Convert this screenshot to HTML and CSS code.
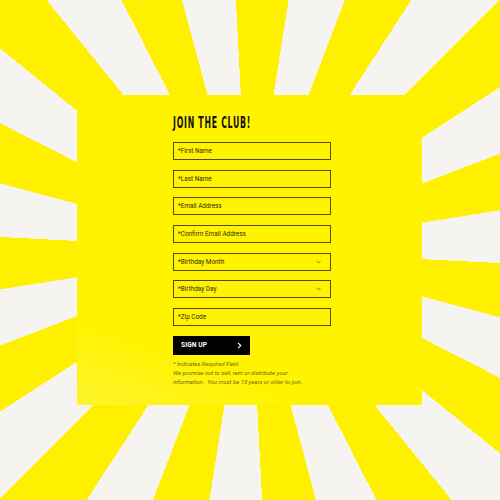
FILE: index.html
```html
<!DOCTYPE html>
<html lang="en">
<head>
<meta charset="utf-8">
<title>Join the Club</title>
<link rel="stylesheet" href="styles.css">
</head>
<body>
<div class="page">
  <div class="card">
    <form class="form">
      <h1 class="title">JOIN THE CLUB!</h1>
      <div class="field"><span class="ph">*First Name</span></div>
      <div class="field"><span class="ph">*Last Name</span></div>
      <div class="field"><span class="ph">*Email Address</span></div>
      <div class="field"><span class="ph">*Confirm Email Address</span></div>
      <div class="field select"><span class="ph">*Birthday Month</span>
        <svg class="chev" width="5" height="4" viewBox="0 0 5 4"><path d="M0.6 1 L2.5 2.9 L4.4 1" fill="none" stroke="#6b6820" stroke-width="0.9"/></svg>
      </div>
      <div class="field select"><span class="ph">*Birthday Day</span>
        <svg class="chev" width="5" height="4" viewBox="0 0 5 4"><path d="M0.6 1 L2.5 2.9 L4.4 1" fill="none" stroke="#6b6820" stroke-width="0.9"/></svg>
      </div>
      <div class="field"><span class="ph">*Zip Code</span></div>
      <button type="button" class="btn"><span>SIGN UP</span>
        <svg width="5" height="7" viewBox="0 0 5 7"><path d="M1 0.8 L3.8 3.5 L1 6.2" fill="none" stroke="#fff" stroke-width="1.1"/></svg>
      </button>
      <p class="note req">* Indicates Required Field</p>
      <p class="note">We promise not to sell, rent or distribute your<br>information.&nbsp; You must be 13 years or older to join.</p>
    </form>
  </div>
</div>
</body>
</html>
```

FILE: styles.css
```css
* { box-sizing: border-box; }
html, body { margin: 0; padding: 0; }
body {
  width: 500px;
  height: 500px;
  overflow: hidden;
  font-family: Roboto, "Liberation Sans", sans-serif;
}
.page {
  width: 500px;
  height: 500px;
  padding: 95px 78px 95px 77px;
  background: repeating-conic-gradient(from 9deg at 49.8% 50%, #f5f4f1 0deg 12deg, #fff000 12deg 24deg);
}
.card {
  width: 345px;
  height: 310px;
  background: linear-gradient(20deg, #fff42e 0%, #fff300 20%, #fff300 100%);
  padding: 20px 0 0 96px;
}
.form { display: flex; flex-direction: column; width: 158px; }
.title {
  margin: 0 0 11px 0;
  height: 16px;
  line-height: 16px;
  font-family: "DejaVu Sans Condensed", "Liberation Sans", sans-serif;
  font-weight: bold;
  font-size: 15.5px;
  letter-spacing: 1.3px;
  color: #111;
  transform: scaleX(0.56);
  transform-origin: left center;
  white-space: nowrap;
}
.field {
  height: 18px;
  margin-bottom: 9.67px;
  border: 1.3px solid #4f4c16;
  display: flex;
  align-items: center;
  justify-content: space-between;
  padding: 0 9px 0 4px;
}
.ph {
  font-size: 6.4px;
  color: #2e2c10;
}
.chev { display: block; }
.btn {
  width: 77px;
  height: 19px;
  background: #000;
  border: none;
  display: flex;
  align-items: center;
  justify-content: space-between;
  padding: 0 8px 0 8px;
  color: #fff;
  font-family: Roboto, "Liberation Sans", sans-serif;
  font-weight: bold;
  font-size: 6.6px;
  letter-spacing: 0.1px;
}
.btn svg { display: block; }
.note {
  margin: 0;
  font-size: 5.95px;
  line-height: 9px;
  font-style: italic;
  color: #6b691d;
  white-space: nowrap;
}
.req { margin-top: 4px; }
```
